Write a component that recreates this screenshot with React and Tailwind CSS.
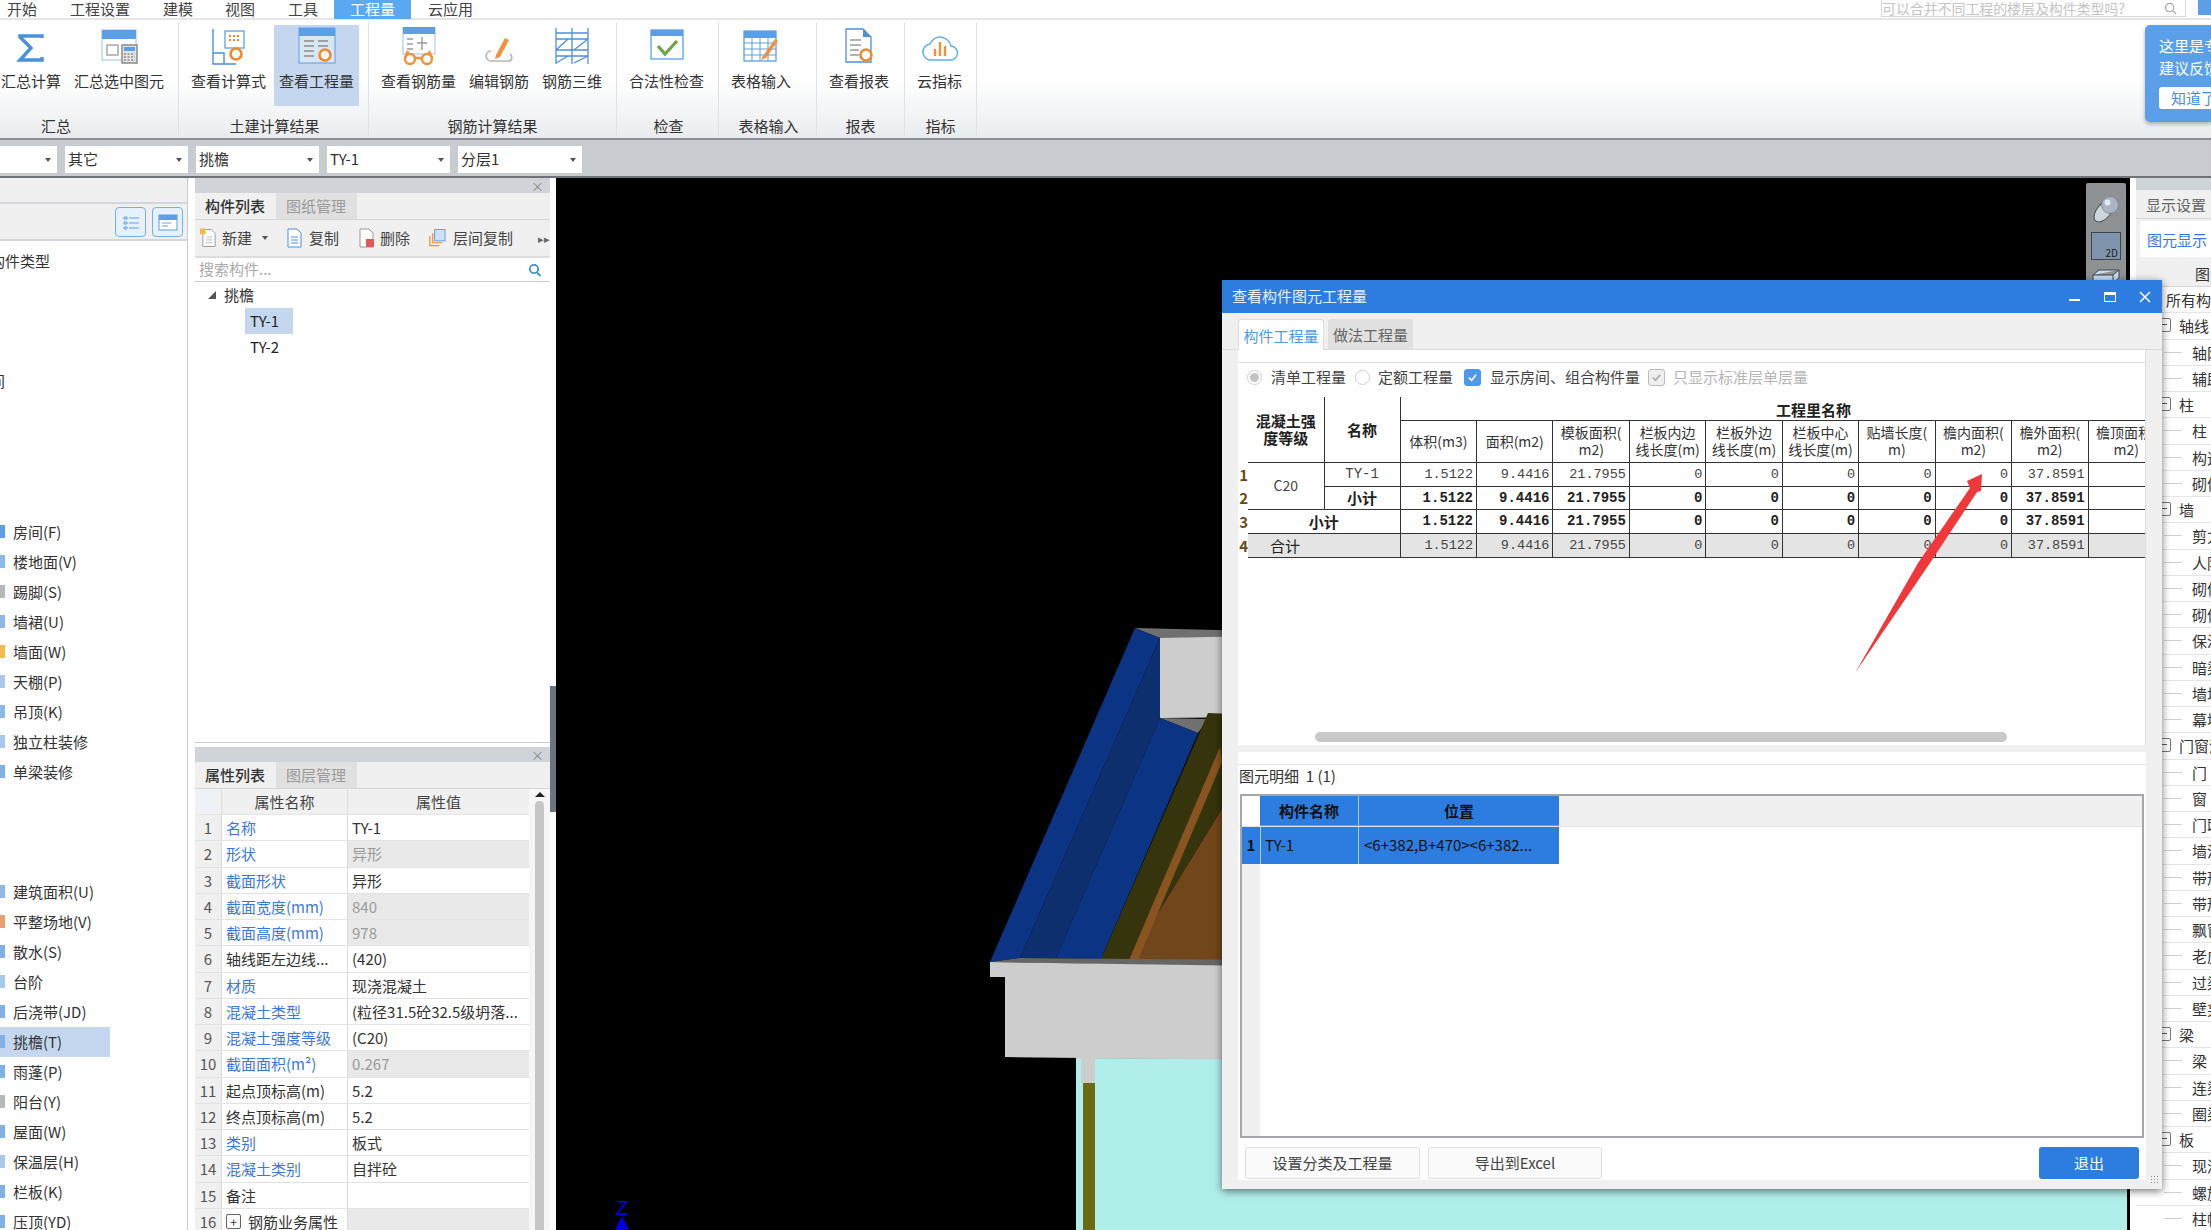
const MENU = [
  ['开始', 'w-[60px]', 'pl-[7px]'], ['工程设置', 'w-[103px]', 'pl-[10px]'], ['建模', 'w-[62px]', 'pl-[0px]'],
  ['视图', 'w-[63px]', 'pl-[0px]'], ['工具', 'w-[46px]', 'pl-[0px]'],
]

const Frame = ({ children }) => (
  <svg viewBox="0 0 40 40" className="w-[40px] h-[40px]" fill="none">{children}</svg>
)

const IconSigma = () => (
  <Frame><path d="M31 11V9H9v1l11 11L9 33v0h22v-3" stroke="#4a90dc" strokeWidth="3.4" /></Frame>
)
const IconSum = () => (
  <Frame>
    <rect x="3" y="3" width="34" height="30" fill="#fff" stroke="#9cc3ee" />
    <rect x="3" y="3" width="34" height="9" fill="#5b9fe6" />
    <rect x="8" y="18" width="11" height="10" stroke="#a8a8a8" strokeWidth="1.5" />
    <rect x="23" y="18" width="15" height="18" fill="#e4e4e4" stroke="#8a8a8a" strokeWidth="1.5" />
    <rect x="25" y="20" width="11" height="4" fill="#5b9fe6" />
    <path d="M25 27h11M25 30h11M25 33h11" stroke="#8a8a8a" strokeWidth="1.6" strokeDasharray="2 1.5" />
  </Frame>
)
const Lens = ({ x = 28, y = 29 }) => (
  <g stroke="#ee8a2c" strokeWidth="2.6">
    <circle cx={x} cy={y} r="5.5" fill="#fff" fillOpacity=".6" />
    <path d={`M${x + 4} ${y + 4}l5 5`} strokeLinecap="round" />
  </g>
)
const IconFormula = () => (
  <Frame>
    <path d="M4 2v35h23M4 26h11v11" stroke="#4a90dc" strokeWidth="1.4" />
    <rect x="16" y="4" width="19" height="17" fill="#fff" stroke="#6ba6e6" strokeWidth="1.4" />
    <path d="M20 9h12M20 13h12" stroke="#ee8a2c" strokeWidth="2" strokeDasharray="2 2" />
    <Lens x="27" y="27" />
  </Frame>
)
const IconQuantity = () => (
  <Frame>
    <rect x="2" y="1" width="36" height="35" fill="#dbe6f3" stroke="#5b9fe6" />
    <rect x="2" y="1" width="36" height="8" fill="#5b9fe6" />
    <path d="M7 14h10M7 19h10M7 24h10M7 29h10M21 14h10M21 19h10" stroke="#8c8c8c" strokeWidth="1.5" />
    <Lens x="28" y="28" />
  </Frame>
)
const IconRebar = () => (
  <Frame>
    <rect x="4" y="0" width="32" height="27" fill="#fff" stroke="#9cc3ee" />
    <rect x="4" y="0" width="32" height="7" fill="#5b9fe6" />
    <path d="M8 12h6M8 17h6M8 22h6M23 10v13M18 16h10" stroke="#9a9a9a" strokeWidth="1.4" />
    <g stroke="#f0913c" strokeWidth="2.4">
      <circle cx="11" cy="32" r="5" fill="#fff" />
      <circle cx="28" cy="32" r="5" fill="#fff" />
      <path d="M16 31h7M6 31l3-7M33 31l-3-7" />
    </g>
  </Frame>
)
const IconEdit = () => (
  <Frame>
    <path d="M12 24a5 5 0 0 0 0 10h18c3 0 4-5 1-7" stroke="#b5b5b5" strokeWidth="1.6" />
    <path d="M17 28l9-17 4 2-9 17-5 2z" fill="#f0913c" />
  </Frame>
)
const IconRebar3d = () => (
  <Frame>
    <path d="M4 1v36M20 1v36M36 1v36M4 6h32M4 12h32M4 23h32M4 29h32M4 23l12-11M22 23l14-11M4 36l12-7M22 36l14-7" stroke="#4a90dc" strokeWidth="1.3" />
  </Frame>
)
const IconCheck = () => (
  <Frame>
    <rect x="4" y="3" width="32" height="29" fill="#fff" stroke="#5b9fe6" strokeWidth="1.3" />
    <rect x="4" y="3" width="32" height="6" fill="#5b9fe6" />
    <path d="M11 19l7 8 12-13" stroke="#6da34a" strokeWidth="3.2" />
  </Frame>
)
const IconTable = () => (
  <Frame>
    <rect x="3" y="4" width="32" height="30" fill="#fff" stroke="#5b9fe6" strokeWidth="1.3" />
    <rect x="3" y="4" width="32" height="7" fill="#5b9fe6" />
    <path d="M3 16h32M3 22h32M3 28h32M11 11v23M19 11v23M27 11v23" stroke="#5b9fe6" />
    <path d="M22 29l12-17 3 2-12 17-5 2z" fill="#f0913c" />
  </Frame>
)
const IconReport = () => (
  <Frame>
    <path d="M7 2h17l8 8v25H7z" fill="#fff" stroke="#4a90dc" strokeWidth="1.3" />
    <path d="M24 2l8 8h-8z" fill="#4a90dc" />
    <path d="M11 13h11M11 18h11M11 23h9M11 28h9" stroke="#9a9a9a" strokeWidth="1.4" />
    <Lens x="27" y="28" />
  </Frame>
)
const IconCloud = () => (
  <Frame>
    <path d="M12 33h18a7 7 0 0 0 1-14 11 11 0 0 0-21-2 8 8 0 0 0 2 16z" fill="#fff" stroke="#63aeea" strokeWidth="1.5" />
    <path d="M15 22v7M20 15v14M25 19v10" stroke="#f0913c" strokeWidth="2.4" />
  </Frame>
)

const RIBBON = [
  { title: '汇总', cls: 'w-[179px]', pad: 'pl-[1px]', titlePad: 'pr-[66px]', items: [['汇总计算', IconSigma], ['汇总选中图元', IconSum]] },
  { title: '土建计算结果', cls: 'w-[190px]', pad: 'pl-[12px]', titlePad: 'pl-[2px]', items: [['查看计算式', IconFormula], ['查看工程量', IconQuantity, true]] },
  { title: '钢筋计算结果', cls: 'w-[248px]', pad: 'pl-[12px]', titlePad: '', items: [['查看钢筋量', IconRebar], ['编辑钢筋', IconEdit], ['钢筋三维', IconRebar3d]] },
  { title: '检查', cls: 'w-[102px]', pad: 'pl-[12px]', titlePad: 'pl-[2px]', items: [['合法性检查', IconCheck]] },
  { title: '表格输入', cls: 'w-[98px]', pad: 'pl-[12px]', titlePad: 'pl-[2px]', items: [['表格输入', IconTable]] },
  { title: '报表', cls: 'w-[88px]', pad: 'pl-[12px]', titlePad: '', items: [['查看报表', IconReport]] },
  { title: '指标', cls: 'w-[72px]', pad: 'pl-[12px]', titlePad: '', items: [['云指标', IconCloud]] },
]

function Ribbon() {
  return (
    <div className="h-[120px] flex bg-gradient-to-b from-white from-50% to-[#e9ecee] border-b-2 border-[#8b8e92] relative">
      {RIBBON.map((g) => (
        <div key={g.title} className={`${g.cls} border-r border-[#dfe1e3] flex flex-col shrink-0 mt-[2px] mb-[2px]`}>
          <div className={`h-[83px] mt-[3px] flex gap-[13px] ${g.pad}`}>
            {g.items.map(([label, Icon, active]) => (
              <div key={label} className="relative flex flex-col items-center">
                {active && <div className="absolute -left-[5px] -right-[5px] top-0 bottom-0 bg-[#c5d7ef]" />}
                <div className="relative h-[40px] mt-[2px]"><Icon /></div>
                <div className="relative mt-[4px] text-[15px] leading-[20px] whitespace-nowrap text-[#333]">{label}</div>
              </div>
            ))}
          </div>
          <div className={`mt-[10px] text-[15px] leading-[20px] text-center text-[#333] ${g.titlePad}`}>{g.title}</div>
        </div>
      ))}
      <div className="absolute right-0 top-[5px] w-[66px] h-[97px] bg-[#5a9fe8] rounded-l-[5px] shadow-[0_2px_4px_rgba(0,0,0,.3)] pl-[14px] pt-[10px] text-[15px] leading-[22px] text-white whitespace-nowrap overflow-hidden">
        <div>这里是专属</div>
        <div>建议反馈</div>
        <div className="mt-[8px] w-[60px] h-[22px] bg-white rounded-[3px] pl-[12px] text-[#3f8fe6]">知道了</div>
      </div>
    </div>
  )
}

function Caret({ className = '' }) {
  return <span className={`inline-block w-0 h-0 border-x-[3px] border-t-[4px] border-x-transparent border-t-[#555] ${className}`} />
}

function Selects() {
  const rows = [['', 'w-[57px]'], ['其它', 'w-[123px]'], ['挑檐', 'w-[123px]'], ['TY-1', 'w-[123px]'], ['分层1', 'w-[124px]']]
  return (
    <div className="h-[38px] bg-[#c8ccd1] border-b-2 border-[#6f7276] flex gap-[8px] pt-[6px]">
      {rows.map(([t, w], i) => (
        <div key={i} className={`${w} h-[27px] bg-white flex items-center justify-between pl-[3px] pr-[6px] text-[15px] text-[#333]`}>
          <span>{t}</span><Caret />
        </div>
      ))}
    </div>
  )
}

const Frag = ({ c }) => <span className={`absolute left-0 top-[8px] w-[5px] h-[13px] ${c}`} />

const LEFT_A = [
  ['房间(F)', 'bg-[#5b9fe6]'], ['楼地面(V)', 'bg-[#8db8e8]'], ['踢脚(S)', 'bg-[#b8b8b8]'], ['墙裙(U)', 'bg-[#8db8e8]'],
  ['墙面(W)', 'bg-[#f4bd4a]'], ['天棚(P)', 'bg-[#a9c8ec]'], ['吊顶(K)', 'bg-[#8db8e8]'], ['独立柱装修', 'bg-[#a9c8ec]'], ['单梁装修', 'bg-[#7fb0e6]'],
]
const LEFT_B = [
  ['建筑面积(U)', 'bg-[#8db8e8]'], ['平整场地(V)', 'bg-[#e8a070]'], ['散水(S)', 'bg-[#7fb0e6]'], ['台阶', 'bg-[#a9c8ec]'],
  ['后浇带(JD)', 'bg-[#7fb0e6]'], ['挑檐(T)', 'bg-[#7fb0e6]', true], ['雨蓬(P)', 'bg-[#7fb0e6]'], ['阳台(Y)', 'bg-[#b8b8b8]'],
  ['屋面(W)', 'bg-[#7fb0e6]'], ['保温层(H)', 'bg-[#a9c8ec]'], ['栏板(K)', 'bg-[#7fb0e6]'], ['压顶(YD)', 'bg-[#7fb0e6]'],
]

function NavRow({ row }) {
  const [label, color, active] = row
  return (
    <div className={`relative h-[30px] w-[110px] pl-[13px] text-[15px] leading-[30px] text-[#333] whitespace-nowrap ${active ? 'bg-[#c5d7ef]' : ''}`}>
      <Frag c={color} />{label}
    </div>
  )
}

function LeftPanel() {
  return (
    <div className="w-[188px] shrink-0 bg-white border-r border-[#c8ccd1] flex flex-col overflow-hidden">
      <div className="h-[26px] bg-[#f0f0f0] border-b-2 border-[#d4d6d9] shrink-0" />
      <div className="h-[37px] bg-[#f0f0f0] border-b-2 border-[#d4d6d9] flex justify-end gap-[6px] pt-[3px] pr-[4px] shrink-0">
        <div className="w-[31px] h-[30px] rounded-[4px] border border-[#6fb1f2] bg-[#e6f1fc] flex items-center justify-center">
          <svg viewBox="0 0 20 20" className="w-[20px] h-[20px]" fill="none" stroke="#5b9fe6"><path d="M3 5h3v2H3zM3 10h3v2H3zM3 15h3v2H3zM8 6h10M8 11h10M8 16h10" /></svg>
        </div>
        <div className="w-[31px] h-[30px] rounded-[4px] border border-[#6fb1f2] bg-[#e6f1fc] flex items-center justify-center">
          <svg viewBox="0 0 20 20" className="w-[20px] h-[20px]" fill="none"><rect x="1" y="3" width="18" height="15" fill="#fff" stroke="#5b9fe6" /><rect x="1" y="3" width="18" height="5" fill="#5b9fe6" /><path d="M4 11h9M4 14h6" stroke="#5b9fe6" /></svg>
        </div>
      </div>
      <div className="-ml-[10px] mt-[5px] h-[30px] text-[15px] leading-[30px] text-[#333] whitespace-nowrap shrink-0">构件类型</div>
      <div className="-ml-[25px] mt-[90px] h-[30px] text-[15px] leading-[30px] text-[#333] whitespace-nowrap shrink-0">房间</div>
      <div className="mt-[121px] shrink-0">{LEFT_A.map((r) => <NavRow key={r[0]} row={r} />)}</div>
      <div className="mt-[90px] shrink-0">{LEFT_B.map((r) => <NavRow key={r[0]} row={r} />)}</div>
    </div>
  )
}

const PanelHead = () => (
  <div className="h-[15px] bg-[#d0d3d8] flex items-center justify-end pr-[6px] text-[13px] leading-none text-[#888] shrink-0">×</div>
)

function PanelTabs({ a, b }) {
  return (
    <div className="h-[27px] bg-[#f0f0f0] border-b border-[#d4d6d9] flex text-[15px] leading-[26px] shrink-0">
      <div className="w-[81px] pl-[10px] font-medium text-[#333]">{a}</div>
      <div className="w-[81px] pl-[10px] bg-[#e0e0e0] text-[#9a9a9a]">{b}</div>
    </div>
  )
}

const FileIcon = ({ children, stroke = '#9a9a9a' }) => (
  <svg viewBox="0 0 18 20" className="w-[18px] h-[20px]" fill="none">
    <path d="M3 1h9l4 4v14H3z" fill="#fff" stroke={stroke} />
    {children}
  </svg>
)

function ListToolbar() {
  return (
    <div className="h-[38px] bg-[#f0f0f0] border-b-2 border-[#dcdddf] flex items-center text-[15px] text-[#444] whitespace-nowrap pl-[5px] shrink-0">
      <FileIcon><rect x="0" y="0" width="6" height="6" fill="#f0b94a" /><path d="M6 9h7M6 12h7M6 15h7" stroke="#bbb" /></FileIcon>
      <span className="ml-[5px]">新建</span>
      <Caret className="ml-[10px]" />
      <span className="ml-[17px]"><FileIcon stroke="#4a90dc"><path d="M6 9h7M6 12h7M6 15h7" stroke="#4a90dc" /></FileIcon></span>
      <span className="ml-[6px]">复制</span>
      <span className="ml-[18px]"><FileIcon><rect x="9" y="11" width="8" height="8" fill="#e05a5a" /></FileIcon></span>
      <span className="ml-[5px]">删除</span>
      <svg viewBox="0 0 20 20" className="ml-[18px] w-[20px] h-[20px]" fill="none">
        <path d="M2 8v10h10M5 5v10h10" stroke="#ee8a2c" strokeWidth="1.2" />
        <rect x="7" y="1" width="11" height="12" fill="#cfe1f7" stroke="#5b9fe6" />
      </svg>
      <span className="ml-[6px]">层间复制</span>
      <span className="ml-[25px] text-[11px] text-[#666]">▸▸</span>
    </div>
  )
}

function ListPanel() {
  return (
    <div className="h-[565px] bg-white border-b border-[#c8ccd1] flex flex-col shrink-0">
      <PanelHead />
      <PanelTabs a="构件列表" b="图纸管理" />
      <ListToolbar />
      <div className="h-[24px] border-b border-[#c8ccd1] flex items-center justify-between pl-[4px] pr-[8px] text-[15px] text-[#aaa] shrink-0">
        <span>搜索构件...</span>
        <svg viewBox="0 0 14 14" className="w-[14px] h-[14px]" fill="none" stroke="#3f8fc8" strokeWidth="1.8"><circle cx="6" cy="6" r="4.2" /><path d="M9 9.5l3.5 3.5" /></svg>
      </div>
      <div className="relative pl-[29px] h-[26px] text-[15px] leading-[26px] text-[#333]">
        <span className="absolute left-[13px] top-[9px] w-0 h-0 border-l-[8px] border-b-[8px] border-l-transparent border-b-[#555]" />
        挑檐
      </div>
      <div className="ml-[50px] w-[48px] h-[26px] bg-[#c5d7ef] pl-[5px] text-[15px] leading-[26px] text-[#222]">TY-1</div>
      <div className="ml-[50px] w-[48px] h-[26px] pl-[5px] text-[15px] leading-[26px] text-[#222]">TY-2</div>
    </div>
  )
}

const PROPS = [
  ['名称', 'TY-1', 1, 0], ['形状', '异形', 1, 1], ['截面形状', '异形', 1, 0], ['截面宽度(mm)', '840', 1, 1], ['截面高度(mm)', '978', 1, 1],
  ['轴线距左边线...', '(420)', 0, 0], ['材质', '现浇混凝土', 1, 0], ['混凝土类型', '(粒径31.5砼32.5级坍落...', 1, 0], ['混凝土强度等级', '(C20)', 1, 0],
  ['截面面积(m²)', '0.267', 1, 1], ['起点顶标高(m)', '5.2', 0, 0], ['终点顶标高(m)', '5.2', 0, 0], ['类别', '板式', 1, 0], ['混凝土类别', '自拌砼', 1, 0], ['备注', '', 0, 0],
]

function PropPanel() {
  return (
    <div className="mt-[4px] flex-1 bg-white flex flex-col overflow-hidden">
      <PanelHead />
      <PanelTabs a="属性列表" b="图层管理" />
      <div className="flex flex-1 overflow-hidden">
        <div className="w-[334px] shrink-0 text-[15px] whitespace-nowrap">
          <div className="flex h-[26px] bg-[#f0f0f0] border-b border-[#e4e5e7] text-[#444] text-center leading-[26px]">
            <div className="w-[27px] bg-[#eef1f6] border-r border-[#dcdcdc]" />
            <div className="w-[126px] border-r border-[#dcdcdc]">属性名称</div>
            <div className="flex-1">属性值</div>
          </div>
          {PROPS.map(([name, val, blue, gray], i) => (
            <div key={name} className="flex h-[26.25px] leading-[26px] border-b border-[#e2e3e5]">
              <div className="w-[27px] bg-[#f0f0f0] border-r border-[#dcdcdc] text-center text-[#555]">{i + 1}</div>
              <div className={`w-[126px] border-r border-[#dcdcdc] pl-[4px] overflow-hidden ${blue ? 'text-[#3a78e0]' : 'text-[#333]'}`}>{name}</div>
              <div className={`flex-1 pl-[4px] overflow-hidden ${gray ? 'bg-[#e9e9e9] text-[#9a9a9a]' : 'text-[#333]'}`}>{val}</div>
            </div>
          ))}
          <div className="flex h-[26.25px] leading-[26px]">
            <div className="w-[27px] bg-[#f0f0f0] border-r border-[#dcdcdc] text-center text-[#555]">16</div>
            <div className="w-[126px] border-r border-[#dcdcdc] pl-[4px] flex items-center text-[#333]">
              <span className="w-[15px] h-[15px] border border-[#666] rounded-[2px] flex items-center justify-center text-[12px] leading-none mr-[7px]">+</span>钢筋业务属性
            </div>
            <div className="flex-1 bg-[#e9e9e9]" />
          </div>
        </div>
        <div className="flex-1 flex flex-col items-center bg-[#f6f6f6] pt-[3px]">
          <span className="w-0 h-0 border-x-[5px] border-b-[5px] border-x-transparent border-b-[#222]" />
          <div className="mt-[4px] w-[9px] flex-1 rounded-t-[5px] bg-[#c6c6c6]" />
        </div>
      </div>
    </div>
  )
}

function Scene() {
  return (
    <div className="relative flex-1 min-w-0 bg-black overflow-hidden">
      <svg viewBox="556 178 1574 1052" className="w-full h-full block">
        <polygon points="1076,1058 2127,1062 2127,1230 1076,1230" fill="#b0eeea" />
        <polygon points="1135,628 1260,631 1260,638 1160,638" fill="#707070" />
        <polygon points="1160,638 1260,636 1260,717 1160,718" fill="#cdcdcd" />
        <polygon points="1160,718 1208,719 1198,733" fill="#707070" />
        <polygon points="1135,628 1160,638 1020,958 990,962" fill="#0c3484" />
        <polygon points="1160,638 1160,718 1056,958 1020,958" fill="#0d2f6e" />
        <polygon points="1160,718 1198,733 1101,959 1056,958" fill="#0c3484" />
        <polygon points="1208,713 1260,715 1260,747 1129,960 1101,959" fill="#35340c" />
        <polygon points="1260,747 1129,960 1260,960" fill="#71461a" />
        <polygon points="1220,747 1129,960 1138,960 1222,762" fill="#8a5420" />
        <polygon points="990,962 1020,958 1260,960 1260,967" fill="#666666" />
        <polygon points="990,962 1260,966 1260,1060 1005,1057 1005,977 990,977" fill="#cdcdcd" />
        <rect x="1081" y="1058" width="14" height="25" fill="#cdcdcd" />
        <rect x="1083" y="1083" width="12" height="147" fill="#6e6a14" />
        <text x="622" y="1215" textAnchor="middle" fontSize="20" fontFamily="Liberation Sans, sans-serif" fill="#0000e0">Z</text>
        <polygon points="622,1216 615,1230 629,1230" fill="#0000e0" />
      </svg>
      <div className="absolute right-[4px] top-[5px] w-[40px] h-[110px] bg-[#8f9295] rounded-t-[2px] flex flex-col items-center pt-[11px]">
        <svg viewBox="0 0 30 30" className="w-[30px] h-[30px]">
          <ellipse cx="13" cy="17" rx="7" ry="13" transform="rotate(40 13 17)" fill="#cfd5dd" stroke="#4a4f55" />
          <circle cx="19" cy="11" r="8.5" fill="#aab4c2" stroke="#6c7480" strokeWidth=".6" />
          <circle cx="16.5" cy="8.5" r="3" fill="#e6eaf0" />
        </svg>
        <div className="mt-[8px] w-[30px] h-[28px] bg-[#7f93ad] border border-[#3d4650] flex items-end justify-end pr-[2px] text-[10px] leading-[12px] text-[#222]">2D</div>
        <svg viewBox="0 0 30 20" className="mt-[8px] w-[30px] h-[20px]" fill="#c6dcf3" stroke="#444"><path d="M2 7l6-5h20v8l-6 5H2zM2 7h20l6-5M22 7v8" /></svg>
      </div>
    </div>
  )
}

const TREE = [
  ['所有构件', 0], ['轴线', 1], ['轴网', 2], ['辅助轴线', 2], ['柱', 1], ['柱', 2], ['构造柱', 2], ['砌体柱', 2], ['墙', 1], ['剪力墙', 2], ['人防门框墙', 2],
  ['砌体墙', 2], ['砌体加筋', 2], ['保温墙', 2], ['暗梁', 2], ['墙垛', 2], ['幕墙', 2], ['门窗洞', 1], ['门', 2], ['窗', 2], ['门联窗', 2], ['墙洞', 2], ['带形窗', 2],
  ['带形洞', 2], ['飘窗', 2], ['老虎窗', 2], ['过梁', 2], ['壁龛', 2], ['梁', 1], ['梁', 2], ['连梁', 2], ['圈梁', 2], ['板', 1], ['现浇板', 2], ['螺旋板', 2], ['柱帽', 2],
]

function RightPanel() {
  return (
    <div className="w-[81px] shrink-0 border-l-[6px] border-white bg-white flex flex-col overflow-hidden text-[15px] text-[#333] whitespace-nowrap">
      <div className="h-[12px] bg-[#d0d3d8] shrink-0" />
      <div className="h-[29px] bg-[#f0f0f0] border-b border-[#d4d6d9] pl-[10px] leading-[29px] text-[#666] shrink-0">显示设置</div>
      <div className="h-[38px] bg-[#f0f0f0] pl-[4px] pt-[2px] shrink-0">
        <div className="h-full w-[90px] bg-white rounded-t-[3px] pl-[7px] leading-[38px] text-[#3a78e0]">图元显示</div>
      </div>
      <div className="h-[30px] bg-[#f0f0f0] border-b border-[#d4d6d9] pl-[59px] leading-[33px] shrink-0">图元</div>
      {TREE.map(([t, level], i) => (
        <div key={i} className="relative h-[26.25px] shrink-0 border-b border-[#e4e5e7] leading-[25px]">
          {level === 0 && <span className="pl-[30px]">{t}</span>}
          {level === 1 && <>
            <span className="absolute left-[21px] top-[5px] w-[14px] h-[14px] border border-[#777] rounded-[2px] bg-white" />
            <span className="absolute left-[24px] top-[11px] w-[7px] h-[1px] bg-[#555]" />
            <span className="pl-[43px]">{t}</span>
          </>}
          {level === 2 && <>
            <span className="absolute left-[28px] top-[12px] w-[18px] h-[1px] bg-[#d0d0d0]" />
            <span className="pl-[56px]">{t}</span>
          </>}
        </div>
      ))}
    </div>
  )
}

const NUM = 'font-[\'Liberation_Mono\',monospace] text-right pr-[3px] pt-[1px] border-r border-b border-[#333]'
const VALS = ['1.5122', '9.4416', '21.7955', '0', '0', '0', '0', '0', '37.8591', '']
const HEADS = [['体积(m3)'], ['面积(m2)'], ['模板面积(', 'm2)'], ['栏板内边', '线长度(m)'], ['栏板外边', '线长度(m)'], ['栏板中心', '线长度(m)'], ['贴墙长度(', 'm)'], ['檐内面积(', 'm2)'], ['檐外面积(', 'm2)'], ['檐顶面积(', 'm2)']]

const Vals = ({ bold, gray }) => VALS.map((v, i) => (
  <td key={i} className={`${NUM} ${bold ? 'font-bold' : 'text-[#444] text-[13.5px]'} ${gray ? 'bg-[#e4e4e4]' : ''}`}>{v}</td>
))

const RowNo = ({ n }) => <td className="text-[15px] text-[#6a4a1a] font-bold text-right">{n}</td>

function QuantityTable() {
  return (
    <div className="mt-[6px] h-[165px] overflow-hidden shrink-0">
      <table className="table-fixed border-collapse w-[927px] text-[14px] leading-[17px] text-[#222]">
        <colgroup>
          <col className="w-[10px]" /><col className="w-[76px]" /><col className="w-[76px]" />
          {HEADS.map((h) => <col key={h[0]} className="w-[76.4px]" />)}
        </colgroup>
        <tbody>
          <tr className="h-[23px]">
            <td />
            <td rowSpan={2} className="border-r border-b border-[#333] text-center font-bold text-[15px]">混凝土强<br />度等级</td>
            <td rowSpan={2} className="border-r border-b border-[#333] text-center font-bold text-[15px]">名称</td>
            <td colSpan={10} className="border-b border-[#333] text-center font-bold text-[15px] pl-[62px] pt-[4px] leading-[18px]">工程里名称</td>
          </tr>
          <tr className="h-[42px]">
            <td />
            {HEADS.map((h) => (
              <td key={h[0]} className="border-r border-b border-[#333] text-center text-[#333] whitespace-nowrap overflow-hidden">
                {h.map((l) => <div key={l}>{l}</div>)}
              </td>
            ))}
          </tr>
          <tr className="h-[24px]">
            <RowNo n="1" />
            <td rowSpan={2} className="border-r border-b border-[#333] text-center text-[#444]">C20</td>
            <td className="border-r border-b border-[#333] text-center font-['Liberation_Mono',monospace] text-[#444]">TY-1</td>
            <Vals />
          </tr>
          <tr className="h-[23px]">
            <RowNo n="2" />
            <td className="border-r border-b border-[#333] text-center font-bold text-[15px]">小计</td>
            <Vals bold />
          </tr>
          <tr className="h-[24px]">
            <RowNo n="3" />
            <td colSpan={2} className="border-r border-b border-[#333] text-center font-bold text-[15px]">小计</td>
            <Vals bold />
          </tr>
          <tr className="h-[24px]">
            <RowNo n="4" />
            <td colSpan={2} className="border-r border-b border-[#333] bg-[#e4e4e4] pl-[22px] text-[15px]">合计</td>
            <Vals gray />
          </tr>
        </tbody>
      </table>
    </div>
  )
}

const Radio = ({ on }) => (
  <span className="w-[15px] h-[15px] rounded-full border border-[#cfcfcf] bg-white flex items-center justify-center shrink-0">
    {on && <span className="w-[9px] h-[9px] rounded-full bg-[#c4c4c4]" />}
  </span>
)
const Check = ({ on }) => (
  <span className={`w-[17px] h-[17px] rounded-[3px] flex items-center justify-center shrink-0 border ${on ? 'bg-[#4f97ea] border-[#4f97ea]' : 'bg-[#efefef] border-[#bcbcbc]'}`}>
    <svg viewBox="0 0 12 12" className="w-[11px] h-[11px]" fill="none" stroke={on ? '#fff' : '#aaa'} strokeWidth="1.8"><path d="M2 6l3 3 5-6" /></svg>
  </span>
)

function Dialog() {
  return (
    <div className="absolute left-[1222px] top-[280px] w-[940px] h-[909px] bg-[#f0f0f0] shadow-[0_2px_8px_rgba(0,0,0,.55)] flex flex-col">
      <div className="h-[33px] bg-[#2d7de0] flex items-center pl-[10px] pr-[11px] text-[15px] text-[#e6f0fb] shrink-0">
        <span>查看构件图元工程量</span>
        <span className="ml-auto mt-[7px] w-[11px] h-[2px] bg-white" />
        <span className="ml-[24px] w-[12px] h-[10px] border border-t-[3px] border-white" />
        <svg viewBox="0 0 12 12" className="ml-[23px] w-[12px] h-[12px]" stroke="#fff" strokeWidth="1.5"><path d="M1 1l10 10M11 1L1 11" /></svg>
      </div>
      <div className="h-[37px] px-[16px] pt-[6px] flex text-[15px] leading-[32px] shrink-0 border-b border-[#d9d9d9] mx-0">
        <div className="w-[86px] h-[31px] bg-white rounded-t-[3px] border border-b-0 border-[#dcdcdc] text-center text-[#4c9be8]">构件工程量</div>
        <div className="ml-[4px] w-[85px] h-[31px] bg-[#e0e0e0] rounded-t-[3px] text-center text-[#666]">做法工程量</div>
      </div>
      <div className="mx-[16px] h-[395px] bg-white flex flex-col shrink-0 border-r border-[#dedede]">
        <div className="h-[13px] bg-white border-b border-[#dedede] shrink-0" />
        <div className="h-[28px] flex items-center text-[15px] text-[#444] whitespace-nowrap pl-[9px] shrink-0">
          <Radio on /><span className="ml-[9px]">清单工程量</span>
          <span className="ml-[9px]"><Radio /></span><span className="ml-[8px]">定额工程量</span>
          <span className="ml-[11px]"><Check on /></span><span className="ml-[9px]">显示房间、组合构件量</span>
          <span className="ml-[8px]"><Check /></span><span className="ml-[8px] text-[#b5b5b5]">只显示标准层单层量</span>
        </div>
        <QuantityTable />
        <div className="mt-auto mb-[3px] ml-[77px] w-[692px] h-[10px] rounded-full bg-[#c8c8c8] shrink-0" />
      </div>
      <div className="h-[7px] shrink-0" />
      <div className="mx-[16px] flex-1 bg-white flex flex-col min-h-0">
        <div className="h-[12px] shrink-0" />
        <div className="h-[30px] border-t border-[#e2e2e2] pl-[1px] text-[15px] leading-[22px] text-[#333] shrink-0">图元明细&nbsp;&nbsp;1 (1)</div>
        <div className="mx-[2px] h-[344px] border-2 border-[#a4a6a9] flex flex-col text-[15px] shrink-0">
          <div className="h-[31px] flex bg-[#f0f0f0] leading-[30px] font-bold text-[#111] text-center shrink-0 border-b border-[#e4e4e4]">
            <div className="w-[18px] bg-white" />
            <div className="w-[99px] bg-[#2d7de0] border-r border-[#a9cdf2] border-b border-b-[#3fb0d8]">构件名称</div>
            <div className="w-[200px] bg-[#2d7de0] border-b border-[#3fb0d8]">位置</div>
          </div>
          <div className="h-[37px] flex bg-white leading-[35px] text-[#111] shrink-0">
            <div className="w-[18px] bg-[#2d7de0] text-center font-bold">1</div>
            <div className="w-[99px] bg-[#2d7de0] pl-[4px] border-x border-[#a9cdf2]">TY-1</div>
            <div className="w-[200px] bg-[#2d7de0] pl-[5px] whitespace-nowrap">&lt;6+382,B+470&gt;&lt;6+382...</div>
          </div>
          <div className="flex-1 w-[18px] bg-[#f0f0f0]" />
        </div>
        <div className="flex-1 flex items-start px-[7px] pt-[9px] text-[15px]">
          <div className="w-[175px] h-[32px] bg-[#fafafa] border border-[#dcdfe4] rounded-[3px] text-center leading-[30px] text-[#444]">设置分类及工程量</div>
          <div className="ml-[8px] w-[174px] h-[32px] bg-[#fafafa] border border-[#dcdfe4] rounded-[3px] text-center leading-[30px] text-[#444]">导出到Excel</div>
          <div className="ml-auto w-[100px] h-[32px] bg-[#2d7de0] rounded-[3px] text-center leading-[32px] text-white">退出</div>
        </div>
      </div>
      <div className="h-[9px] shrink-0 flex justify-end pr-[3px] items-start">
        <span className="mt-[-5px] w-[9px] h-[9px] bg-[radial-gradient(#8a8a8a_1px,transparent_1px)] bg-[length:3px_3px]" />
      </div>
    </div>
  )
}

export default function App() {
  return (
    <div className="relative w-[2211px] h-[1230px] overflow-hidden bg-white font-['Noto_Sans_CJK_SC','Noto_Sans',sans-serif]">
      <div className="h-[20px] bg-white border-b-2 border-[#e4e6e8] flex items-start text-[15px] leading-[17px] text-[#444] whitespace-nowrap">
        {MENU.map(([t, w, p]) => <div key={t} className={`${w} ${p}`}>{t}</div>)}
        <div className="w-[77px] h-[19px] bg-[#5aa9f0] text-white text-center">工程量</div>
        <div className="ml-[17px]">云应用</div>
        <div className="ml-auto mr-[12px] w-[305px] h-[17px] border border-t-0 border-[#d8d8d8] flex items-center pl-[0px] text-[14px] tracking-[-0.1px] text-[#c4c4c4]">
          <span>可以合并不同工程的楼层及构件类型吗?</span>
          <svg viewBox="0 0 14 14" className="ml-auto mr-[8px] w-[13px] h-[13px]" fill="none" stroke="#aaa" strokeWidth="1.3"><circle cx="6" cy="6" r="4.5" /><path d="M9.5 9.5l3.5 3.5" /></svg>
        </div>
        <div className="w-[13px] h-[15px] bg-[#5a9fe8]" />
      </div>
      <Ribbon />
      <Selects />
      <div className="h-[1052px] flex bg-white overflow-hidden">
        <LeftPanel />
        <div className="w-[7px] shrink-0" />
        <div className="w-[355px] shrink-0 flex flex-col">
          <ListPanel />
          <PropPanel />
        </div>
        <div className="relative w-[6px] shrink-0 bg-white">
          <div className="absolute left-0 top-[508px] w-[6px] h-[126px] bg-[#6b7580]" />
        </div>
        <Scene />
        <RightPanel />
      </div>
      <Dialog />
      <svg viewBox="0 0 140 210" className="absolute left-[1850px] top-[470px] w-[140px] h-[210px]">
        <polygon points="132,4 117,11 120,18 68,93 5,203 80,93 127,22 131,21" fill="#f0383a" />
      </svg>
    </div>
  )
}
